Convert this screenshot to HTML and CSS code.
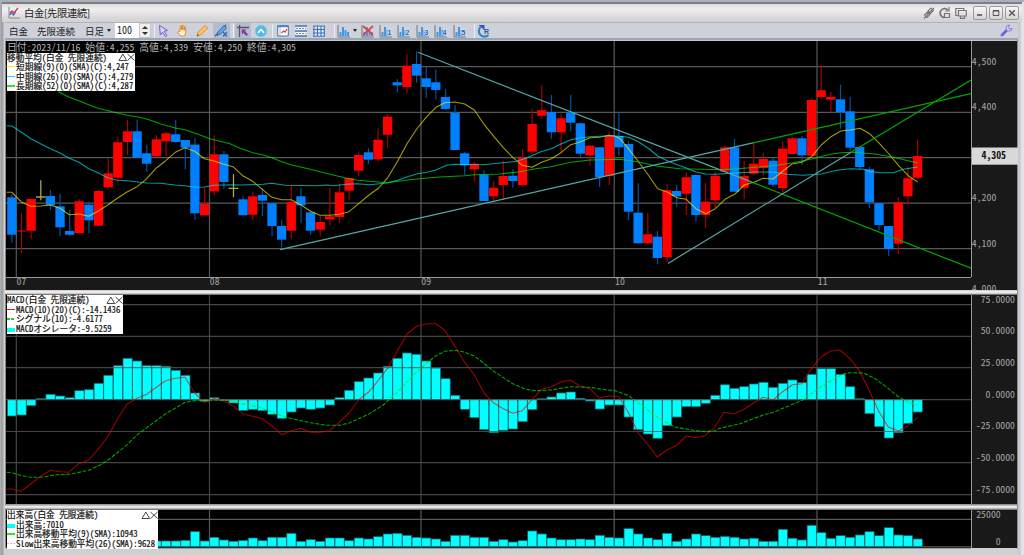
FILE: index.html
```html
<!DOCTYPE html>
<html lang="ja">
<head>
    <meta charset="UTF-8">
    <title>白金[先限連続]</title>
    <link rel="stylesheet" href="styles.css">
</head>
<body>

<div class="window">
    <div class="titlebar">
        <svg class="app-icon" width="12" height="12" viewBox="0 0 12 12"><path d="M1 0v11h11" fill="none" stroke="#888"/><path d="M1.5 8l2-2 2 2 2-3" fill="none" stroke="#3a6ee0" stroke-width="1.4"/><path d="M2 6l2-2 2 2 4-5" fill="none" stroke="#e03434" stroke-width="1.4"/></svg>
        <span class="title">白金[先限連続]</span>
        <div class="title-tools">
            <svg width="12" height="12" viewBox="0 0 12 12"><g fill="none" stroke="#777" stroke-width="1.1"><path d="M5 4l3-3 2.500 2.500-3 3zM1.500 8l3-3 2.500 2.500-3 3z"/><path d="M1 11.500L11 1M4 7l4-3"/></g></svg>
            <svg width="12" height="12" viewBox="0 0 12 12"><g fill="none" stroke="#777"><path d="M9 3A4.500 4.500 0 1 0 5 10.500" stroke-width="1.800"/><path d="M10 0v4H6M5.500 6.500h5v4h-5z" stroke-width="1.200"/></g></svg>
            <svg width="12" height="12" viewBox="0 0 12 12"><g fill="none" stroke="#777" stroke-width="1.200"><path d="M3 8.500H.8V1.500h8V3M3.500 3.500h7.800v5.500H3.500zM5.500 9v2.300h4V9"/></g></svg>
        </div>
        <div class="win-buttons">
            <button><svg width="8" height="8"><path d="M1 6h5" stroke="#555" stroke-width="1.600"/></svg></button>
            <button><svg width="8" height="8"><path d="M1 1.800h6" stroke="#555" stroke-width="1.600"/><path d="M1.200 1.500h5.600v5H1.200z" fill="none" stroke="#555"/></svg></button>
            <button><svg width="8" height="8"><path d="M1.200 1.200l5.600 5.600M6.800 1.200L1.200 6.800" stroke="#555" stroke-width="1.400"/></svg></button>
        </div>
    </div>

    <div class="toolbar">
        <span class="label brand">白金</span>
        <span class="label contract">先限連続</span>
        <span class="label period">日足</span>
        <i class="caret"></i>
        <div class="count">
            <span>100</span>
            <div class="spinner"><i class="up"></i><i class="down"></i></div>
        </div>
        <div class="group g-draw">
            <span class="tool"><svg width="14" height="14" viewBox="0 0 14 14"><path d="M2.500 1.500l8 5-3.500.7 3 4.300-1.700 1-2.800-4.300L3.300 11z" fill="#dcd4ff" stroke="#6b5fc8"/></svg></span>
            <span class="tool"><svg width="14" height="14" viewBox="0 0 14 14"><path d="M4 7.500V2.800q.8-1 1.300 0V6 1.700q.9-1 1.500 0V6 2.200q.9-.9 1.500 0v4.200-3q.9-.8 1.400 0v5.400q0 3.500-3.200 3.500-2 0-3-1.700L1.500 8q.7-1.400 2.500-.5z" fill="#fff0dc" stroke="#e08a2c"/></svg></span>
            <span class="tool"><svg width="14" height="14" viewBox="0 0 14 14"><path d="M2 12l1-3.500 7-7 2.500 2.500-7 7z" fill="#ffc36a" stroke="#d98a28"/><path d="M2 12l.6-2 1.500 1.400z" fill="#555"/></svg></span>
            <span class="tool on"><svg width="14" height="14" viewBox="0 0 14 14"><path d="M1 12L12 1" stroke="#555" stroke-width="1.200"/><path d="M3 11.500l1-3.500 6-6.500 2.500 2.500L6.500 10z" fill="#5aa9f0" stroke="#3267b0"/><path d="M9 8l4 4.500M13 8l-4 4.500" stroke="#3267b0" stroke-width="1.300"/></svg></span>
        </div>
        <div class="group g-view">
            <span class="tool on"><svg width="14" height="14" viewBox="0 0 14 14"><path d="M1 3.500h12M3.500 1v12" stroke="#556" stroke-width="1.300"/><path d="M5.500 5.500h5L9 7l3 3.500-1.500 1.500L7.500 9 6 10.500z" fill="#8a3a9c"/></svg></span>
            <span class="tool"><svg width="14" height="14" viewBox="0 0 14 14"><circle cx="7" cy="7" r="5.800" fill="#55b7e4" stroke="#7ccbee"/><path d="M4 8.800l3-3.300 3 3.300" fill="none" stroke="#fff" stroke-width="1.800"/></svg></span>
        </div>
        <div class="group g-grid">
            <span class="tool"><svg width="14" height="14" viewBox="0 0 14 14"><path d="M1.700 2h10.600v10H1.700z" fill="#fff" stroke="#4b6fae"/><path d="M1.500 2.200h11" stroke="#3f82d8" stroke-width="2"/><path d="M4 3v9" stroke="#89b6e8"/><path d="M5.500 9l2-2 1.500 1 2-3" stroke="#e04848" stroke-width="1.300" fill="none"/></svg></span>
            <span class="tool"><svg width="14" height="14" viewBox="0 0 14 14"><path d="M1.500 1.500h11v11h-11z" fill="#f3f6fa"/><path d="M1 2h12M1 7h12M1 12h12" stroke="#3e6fb5" stroke-width="1.300"/><path d="M2 4.500h10M2 9.500h10" stroke="#888" stroke-dasharray="2 1"/></svg></span>
            <span class="tool"><svg width="14" height="14" viewBox="0 0 14 14"><path d="M1.500 1.500h11v11h-11z" fill="#dfeaf6"/><path d="M1 2h12M1 5.500h12M1 9h12M1 12.300h12M2 1.500v11M5.500 1.500v11M9 1.500v11M12.300 1.500v11" stroke="#3e6fb5" stroke-width="1.100"/></svg></span>
        </div>
        <div class="group g-ind" id="indicators"></div>
        <div class="group g-reload">
            <span class="tool"><svg width="14" height="14" viewBox="0 0 14 14"><path d="M3.500 3A5 5 0 1 0 11.500 11" fill="none" stroke="#2d86cc" stroke-width="2.200"/><path d="M1.500 1h6v5.500z" fill="#2d5fae"/><text x="7" y="9.500" class="reload-r">R</text></svg></span>
        </div>
        <svg class="wrench" width="13" height="13" viewBox="0 0 13 13"><path d="M2 11l5-5" stroke="#6a62e0" stroke-width="2.800" stroke-linecap="round"/><path d="M9.800 1.200A3 3 0 1 0 12 4.500L9.500 5 8.300 3.600z" fill="#d5d6f6" stroke="#7d78e0"/></svg>
    </div>

    <div class="charts">
        <div class="pane price">
            <svg class="plot" id="price-plot" viewBox="6 41 965 235.500"></svg>
            <svg class="scale" id="price-scale" viewBox="972 41 46 249"></svg>
            <svg class="months" id="months" viewBox="6 278 966 12"></svg>
            <div class="ohlc">日付:2023/11/16 始値:4,255 高値:4,339 安値:4,250 終値:4,305</div>
            <div class="legend legend-price">
                <p class="head">移動平均(白金 先限連続)<svg width="17" height="8"><path d="M1 7.500L4.800 1l3.800 6.500zM9.500 1l7 6.500M16.500 1l-7 6.500" fill="none" stroke="#333" stroke-width=".9"/></svg></p>
                <p><i class="key yellow"></i>短期線(9)(0)(SMA)(C):4,247</p>
                <p><i class="key cyan"></i>中期線(26)(0)(SMA)(C):4,279</p>
                <p><i class="key green"></i>長期線(52)(0)(SMA)(C):4,287</p>
            </div>
        </div>
        <div class="splitter"></div>
        <div class="pane macd">
            <svg class="plot" id="macd-plot" viewBox="6 295 965 209"></svg>
            <svg class="scale" id="macd-scale" viewBox="972 295 46 209"></svg>
            <div class="legend legend-macd">
                <p class="head">MACD(白金 先限連続)<svg width="17" height="8"><path d="M1 7.500L4.800 1l3.800 6.500zM9.500 1l7 6.500M16.500 1l-7 6.500" fill="none" stroke="#333" stroke-width=".9"/></svg></p>
                <p><i class="key red"></i>MACD(10)(20)(C):-14.1436</p>
                <p><i class="key dashed"></i>シグナル(10):-4.6177</p>
                <p><i class="key block"></i>MACDオシレータ:-9.5259</p>
            </div>
        </div>
        <div class="splitter"></div>
        <div class="pane volume">
            <svg class="plot" id="volume-plot" viewBox="6 510 965 38"></svg>
            <svg class="scale" id="volume-scale" viewBox="972 510 46 38"></svg>
            <div class="legend legend-volume">
                <p class="head">出来高(白金 先限連続)<svg width="17" height="8"><path d="M1 7.500L4.800 1l3.800 6.500zM9.500 1l7 6.500M16.500 1l-7 6.500" fill="none" stroke="#333" stroke-width=".9"/></svg></p>
                <p><i class="key block"></i>出来高:7010</p>
                <p><i class="key green"></i>出来高移動平均(9)(SMA):10943</p>
                <p><i class="key magenta"></i>Slow出来高移動平均(26)(SMA):9628</p>
            </div>
        </div>
    </div>
</div>

<script src="chart.js"></script>
</body>
</html>
```

FILE: styles.css
```css
* { box-sizing: border-box; margin: 0; padding: 0; }

body {
    width: 1024px;
    height: 555px;
    overflow: hidden;
    background: #a6adb9;
    font-family: "Noto Sans CJK JP", sans-serif;
    color: #222;
}

.window {
    display: flex;
    flex-direction: column;
    height: 555px;
    margin-left: 1px;
    padding: 0 6px 0 4px;
    border-top: 2px solid #aab0bb;
    background: linear-gradient(90deg, #a2a2a2 0, #a2a2a2 2px, #d0d0d0 3px, #d0d0d0 1017px, #c2c2ca 1018px, #e4e3ec 1021px);
}

/* title bar */
.titlebar {
    display: flex;
    align-items: center;
    flex: none;
    height: 20px;
    margin: 0 -4px 0 -3px;
    padding: 0 3px 0 6px;
    border-top: 2px solid #7d7f7f;
    background: linear-gradient(#dcdcdc, #f0f0f0 30%, #d9d9d9 75%, #d2d2d2);
}

.titlebar .title {
    margin-left: 4px;
    font-size: 10.3px;
    line-height: 14px;
    color: #222;
    letter-spacing: -0.35px;
}

.title-tools {
    display: flex;
    gap: 4px;
    margin-left: auto;
}

.win-buttons {
    display: flex;
    gap: 2px;
    margin-left: 6px;
}

.win-buttons button {
    display: flex;
    align-items: center;
    justify-content: center;
    width: 14px;
    height: 14px;
    border: 1px solid #9a9a9a;
    border-radius: 2px;
    background: linear-gradient(#f8f8f8, #d4d4d4);
}

/* toolbar */
.toolbar {
    display: flex;
    align-items: center;
    flex: none;
    height: 18px;
    padding: 0 5px 0 4px;
    border-top: 1px solid #b4b4b4;
    border-bottom: 2px solid #9aa5b8;
    background: #cfd1da;
}

.label {
    font-size: 9.5px;
    line-height: 14px;
    white-space: nowrap;
}
.brand { width: 28px; }
.contract { width: 48px; }
.period { width: 22px; }

.caret {
    width: 0;
    border: 2.5px solid transparent;
    border-top: 3px solid #222;
    border-bottom: 0;
}

.count {
    display: flex;
    width: 36px;
    height: 15px;
    margin-left: 4px;
    background: #fff;
    font-size: 10px;
    line-height: 13px;
    font-feature-settings: "hwid";
    padding-left: 2px;
}

.spinner {
    display: flex;
    flex-direction: column;
    justify-content: center;
    align-items: center;
    gap: 3px;
    width: 12px;
    margin-left: auto;
    border: 1px solid #c8c8c8;
    background: #eee;
}
.spinner i { border: 3px solid transparent; width: 0; }
.spinner .up { border-bottom: 3px solid #333; border-top: 0; }
.spinner .down { border-top: 3px solid #333; border-bottom: 0; }

.group {
    display: flex;
    align-items: center;
    height: 14px;
}
.tool {
    display: flex;
    align-items: center;
    justify-content: center;
    width: 18.4px;
    height: 15px;
}
.tool.on {
    background: #b4bdd0;
    background-clip: content-box;
    padding: 0 1px;
}
.g-draw { margin-left: 3px; border-left: 1px solid #eceef2; }
.g-draw .tool { width: 18.9px; }
.g-view, .g-grid, .g-ind, .g-reload { border-left: 1px solid #eceef2; }
.g-view { margin-left: 2px; }
.g-grid { margin-left: 2px; }
.g-ind { margin-left: 5px; }
.g-ind .tool:first-child { width: 18px; margin-right: 0; }
.g-ind .caret { margin-right: 2px; }
.g-reload { margin-left: 5px; }
.wrench { margin-left: auto; }

/* chart panes */
.charts {
    border-right: 1px solid #8c8c8c;
    height: 509px;
    flex: none;
}

.pane {
    display: grid;
    grid-template-columns: 965px 1px 46px;
    position: relative;
    width: 1012px;
    background: #191919;
    border-left: 1px solid #888;
}
.pane.price { grid-template-rows: 235.5px 13.5px; height: 250px; border-top: 1px solid #c4c8cc; }
.pane.macd { height: 210px; border-top: 1px solid #777; }
.pane.volume { height: 38px; }

.plot {
    display: block;
    width: 965px;
    height: 100%;
    background: #000;
    box-shadow: 1px 0 0 #9a9a9a, 0 1px 0 #9a9a9a;
}
.scale {
    display: block;
    grid-column: 3;
    grid-row: 1 / 3;
    width: 46px;
    height: 100%;
}
.macd .scale, .volume .scale { grid-row: 1; }
.months {
    grid-column: 1;
    grid-row: 2;
    width: 966px;
    height: 12px;
    margin-top: 1.5px;
}

.splitter {
    height: 4px;
    background: linear-gradient(#c2c2c2, #fafafa 50%, #b5b5b5);
}
.macd + .splitter { height: 6px; background: linear-gradient(#777 0, #bbb 25%, #fff 50%, #ccc 65%, #aaa 80%, #555); }

svg text {
    font-family: "Noto Sans CJK JP", sans-serif;
    font-feature-settings: "hwid";
    font-size: 9.8px;
    fill: #a4a4a4;
}
svg text.digit, svg text.reload-r { font: bold 7px "Liberation Sans", sans-serif; fill: #2b5aa8; }
svg text.last { font-weight: bold; fill: #111; }

.grid { stroke: #585858; stroke-width: 1.2; }
.up { fill: #f00; stroke: none; }
.down { fill: #0080ff; }
.wick-up { stroke: #a80000; stroke-width: 1.2; }
.wick-down { stroke: #0052a4; stroke-width: 1.2; }
.doji { stroke: #a8a850; stroke-width: 1.3; }
.bar { fill: #0ff; stroke: #006c70; stroke-width: .7; }
.line { fill: none; stroke-width: 1.1; stroke-linejoin: round; }

/* text over the plots */
.ohlc, .legend {
    position: absolute;
    white-space: nowrap;
    font-feature-settings: "hwid";
}

.ohlc {
    left: 1px;
    top: 0;
    color: #b4b4b4;
    font-size: 9.8px;
    line-height: 12px;
}

.legend {
    left: 1px;
    background: #fff;
    color: #111;
    font-size: 8.7px;
    line-height: 9.6px;
    -webkit-text-stroke: .2px #111;
}
.legend p { display: flex; align-items: center; height: 9.6px; }
.legend .head svg { margin-left: auto; }
.legend-price { top: 11.5px; width: 128px; height: 38.5px; }
.legend-macd { top: 0; width: 116px; height: 38.5px; }
.legend-volume { top: 0; width: 151px; height: 38.5px; }

.key { width: 8px; height: 1.2px; margin-right: 1px; }
.key.yellow { background: #f4f000; }
.key.cyan { background: #00e4f4; }
.key.green { background: #30e030; }
.key.red { background: #e02020; }
.key.dashed { background: repeating-linear-gradient(90deg, #30c030 0 3px, #fff 3px 4px); }
.key.magenta { background: repeating-linear-gradient(90deg, #f4a0f0 0 2px, #fff 2px 3px); }
.key.block { height: 4px; margin-top: 3px; background: #0ff; }
```

FILE: chart.js
```js
const X0 = 11.9, STEP = 9.635;
const cx = i => X0 + i * STEP;
const $ = id => document.getElementById(id);

// [kind, high, body top, body bottom, low]
const candles = [
    ['d',194,197.3,234.7,242.7],['u',213.3,230.5,231.5,253],['u',198.7,199,230.7,239.3],['x',180.3,197,197,200.3],['d',190,196,205.3,210],
    ['d',193.7,206.3,227.3,236],['d',210,231,234.7,235.7],['u',199.3,201.3,233,234.3],['d',201.7,204.7,220.3,233.3],['u',190.3,191,225.7,226],
    ['u',158.7,173.3,187.3,189.7],['u',137,142.3,177.7,182.3],['u',119.7,131.3,142,155],['d',119.7,131.3,157.7,157.7],['d',144.7,153.3,163.7,171.7],
    ['u',135,139.3,156.3,157],['u',131.7,133.3,141.3,156],['d',119.7,134.3,142,142.7],['d',139.7,140,147.7,169.3],['d',138,144.7,213.3,219.7],
    ['u',188,203.7,215.3,215.3],['u',135.3,154.3,191.3,195],['d',151,154.3,182,189],['x',174.3,188.3,188.3,197.3],['d',196.3,199.3,215.3,215.3],
    ['u',191.7,196.3,214.7,220.3],['d',188.3,195,200.7,216.3],['d',203.3,203.3,226,236.3],['d',219.7,226,239.7,247.3],['u',184.7,202,230.7,238.7],
    ['d',188.3,196.3,205.3,223],['d',210.7,212.3,230.7,234.7],['u',215.7,222,229.7,236.3],['u',188.3,216.3,219.3,225.7],['u',183.7,192.3,217,223],
    ['u',177.3,178,190.7,200.3],['u',152.3,155,170.7,176.3],['d',147.7,152.3,159.7,164.3],['u',128.3,139.7,159.3,161.7],['u',113.7,116.7,134.7,148.3],
    ['d',79.3,82.3,85.3,92],['u',54.3,65.7,87,93.3],['d',51.7,64,75.7,82.7],['d',66.7,78.3,87,98],['d',69.3,82.3,90,99.3],
    ['d',89,97,109,109.7],['d',105,112.7,150,150],['d',151.7,153.3,165.3,175],['u',162,163.7,169.3,181.7],['d',170.3,174.7,201,201],
    ['u',181.3,187.7,196.3,201.7],['u',161,176,185,200],['d',169.3,175.7,181,187.7],['u',149.3,157.7,185,186.7],['u',108.7,124,151.7,153.7],
    ['u',85.3,110.3,115.7,119],['d',95,112,132.3,138.7],['u',113.7,118.3,132.3,152.7],['d',95,112.7,122.7,130.7],['d',122.7,123.3,153.7,157.3],
    ['u',145.3,145.7,155.3,165.3],['d',147.3,147.3,177,187],['u',131.7,135.3,176,185],['d',111.7,136,147.3,155.7],['d',141,144,211.7,220],
    ['d',183.3,212.7,243.3,243.3],['u',213,234.3,243.3,244.3],['d',231,236.7,258,264.3],['u',184.3,190.3,257,262.3],['d',185,191,196.3,206.7],
    ['u',172.3,177.3,193.7,215],['d',174.7,175,215,221.7],['u',183,201.7,215,228.3],['u',172,175.7,200.3,208],['u',145.7,147.3,171.7,172],
    ['d',139,147.3,191.7,191.7],['u',161,176,187.7,199],['u',143,163.7,173.7,175],['u',152.7,159,168,175],['d',158,160.7,184.7,187.3],
    ['u',141.3,148.7,188,192.7],['u',137,138.3,154,154],['d',136,138.3,155.3,164.7],['u',97.7,100,155.7,155.7],['u',65.3,90.3,97,99],
    ['u',92,97,99.7,112],['d',84.7,99.3,112,128.7],['d',96.7,111.3,147.7,151.3],['d',146,147,167,170],['d',167,169.3,202.3,208.3],
    ['d',203.3,203.3,225,230],['d',226,226,249,256.3],['u',197.3,202.3,243.7,254],['u',166.7,178.3,196.3,205.3],['u',139.7,156,177.7,179.3]
];

const oscillator = [
    416,415,405.7,398.7,394.3,396,397.7,390.7,389.7,383.3,375.3,365.7,358.3,361,365.7,365.7,366.3,370.3,375.3,393,
    401.3,397.7,400.3,403,410.5,409.3,410.7,414.3,418.3,412,408,409.3,408,405,397.7,390.3,381.7,378,373,366.3,
    358.3,353,354.3,361,368,378.7,395.3,409.3,417.7,429.7,432.7,430.3,429,421.7,409.7,398.7,397,393,392,398.3,
    401,409,405,405,417,429.7,434,438.3,425.7,417,406.7,406.7,403.3,395.3,384.8,388.3,386.7,384,382.3,387.3,
    383.3,380,382.7,374.3,368.7,368.7,374.3,386.7,398.7,413.7,426.7,438,432.7,423.3,412
];

const volume = [
    541,540,539,541,540,538,541,541,540,539,538,540,541,540,540,541,541,541,540.3,531.7,
    541,537.3,540,541.3,540.5,538,540.7,537.3,537.3,533.3,541.3,539.7,541.3,538,538,540.7,538,539,536.7,534,
    533.3,535.3,537.3,538,539,541.3,535.3,535.3,537.3,537.3,541.3,539.7,542,540.7,531,534,538,539.7,539.7,539,
    539.7,535.3,537.3,538,528.7,534,538,539.7,533.3,541.3,539,534,535.7,537.3,536.5,537.3,539,538.3,541.3,541.3,
    529.3,538.3,540,525.3,532.7,538.3,535.7,537.3,535,531.7,535.7,527.7,535,535.7,539
];

// [x offset, y offset, x, y, x, y, ...] segments, three units to a pixel
const sma9 = [
    [0,90, 20,307,36,307,64,336,93,349,123,348,151,345,180,355,208,374,237,372,266,379,294,364,323,345,352,325,381,306,411,290,438,268,468,235,497,212,526,187,555,173,584,184,613,206,642,213,670,222,699,230,728,257],
    [240,90, 38,274,67,298,96,322,125,329,154,329,183,345,211,363,240,376,270,376,298,373,327,365,356,341,387,315,416,294,444,262,473,213,502,160,530,117,560,80,588,52],
    [440,40, 14,188,45,186,74,192,103,210,130,250,162,290,190,323,218,352,247,376,276,382,305,367,334,356,363,338,392,314,420,306,450,293,478,292,507,286,525,289,540,296,567,328,596,366,625,405,653,446,682,456,711,473],
    [680,40, 19,478,48,506,77,521,106,506,135,478,165,462,193,435,221,427,250,415,279,417,308,394,336,372,365,367,395,350,424,315,453,290,482,273,511,270,540,265,569,281,598,310,627,342,656,377,685,407,713,426]
];
const sma26 = [
    [0,90, 20,107,36,108,64,127,93,146,123,162,151,176,180,189,208,205,237,217,266,236,294,248,323,263,352,271,381,272,420,277,440,279,480,280,526,285,555,287,584,292,613,291,642,286,700,284],
    [240,90, 0,285,70,283,96,280,135,286,230,287,259,285,280,287,320,283,350,281,390,284,440,279,473,271,502,260,530,252,560,247,588,240],
    [440,40, 20,376,45,373,130,374,160,371,230,364,260,354,300,336,334,326,363,312,392,299,420,294,450,290,520,287,567,292,596,306,625,325,653,348,682,362,711,374],
    [680,40, 0,377,19,384,48,396,77,402,106,403,165,399,221,396,279,396,320,403,370,406,424,402,470,391,511,386,550,388,569,394,598,398,640,398,670,388,713,381]
];
const sma52 = [
    [0,90, 175,5,208,22,237,32,266,44,294,55,330,64,381,76,420,82,450,90,480,101,526,114,555,119,590,131,630,146,690,161],
    [240,90, 0,175,38,188,67,194,96,203,125,215,155,225,211,238,270,253,327,266,350,270,387,274,444,278,473,274,510,269,588,262],
    [440,40, 0,411,74,407,103,404,180,402,235,396,276,388,334,380,392,367,450,360,540,358,600,367,653,379],
    [680,40, 0,386,130,389,200,384,279,377,336,369,395,357,450,343,482,338,520,337,580,341,640,352,713,369]
];
const macd = [
    [0,285, 20,612,36,612,64,619,93,596,123,573,151,556,180,560,206,562,237,536,266,525,294,493,323,456,352,403,381,357,411,340,440,328,470,306,497,287,526,280,555,277,584,324,613,353,642,340,670,348,699,362,728,386],
    [240,300, 38,349,67,356,96,378,125,404,154,392,183,385,211,397,240,397,269,392,298,367,327,339,356,299,387,275,416,240,444,203,473,151,502,101,530,79,560,71,588,71,614,91,646,140,672,184,702,223],
    [480,300, 12,279,40,308,70,326,98,340,127,332,156,299,185,268,214,260,243,246,271,240,300,258,330,266,358,295,388,287,417,290,446,340,475,399,503,433,532,471,561,450,590,436,619,408,648,413,675,407,704,382],
    [720,285, 12,382,43,386,72,373,101,354,130,337,159,345,188,320,217,299,246,296,275,250,303,216,332,198,360,195,390,221,420,260,447,315,477,380,505,426,535,438,564,422,593,397]
];
const signal = [
    [0,285, 20,562,36,563,66,572,93,577,123,577,170,569,208,568,266,556,300,540,323,526,352,503,381,479,411,450,440,428,497,386,555,352,590,346,670,346,710,350],
    [240,300, 0,310,67,324,125,348,160,357,211,368,260,376,298,376,327,369,387,342,430,315,473,275,520,225,560,190,588,167,614,154,646,151,672,156,702,168],
    [480,300, 0,181,40,213,98,251,135,267,165,272,214,270,271,260,330,262,375,269,405,272,446,287,475,308,503,330,540,358,585,381,640,391,680,395,704,392],
    [720,285, 0,430,60,416,130,390,160,382,246,346,300,307,332,287,370,267,390,263,430,264,464,280,500,307,535,335,564,351,593,361]
];

function polyline(parts, color, extra = '') {
    const pts = [];
    for (const [ox, oy, ...v] of parts) {
        for (let i = 0; i < v.length; i += 2) {
            pts.push((ox + v[i] / 3).toFixed(1) + ',' + (oy + v[i + 1] / 3).toFixed(1));
        }
    }
    return `<polyline class="line" points="${pts.join(' ')}" stroke="${color}" ${extra}/>`;
}

const segment = (x1, y1, x2, y2, color) =>
    `<line x1="${x1}" y1="${y1}" x2="${x2}" y2="${y2}" stroke="${color}" stroke-width="1.2"/>`;

function grid(rows, top, bottom) {
    return rows.map(y => `<line class="grid" x1="6" x2="971" y1="${y}" y2="${y}"/>`).join('') +
        [16.3, 209.5, 421, 614.2, 817].map(x => `<line class="grid" x1="${x}" x2="${x}" y1="${top}" y2="${bottom}"/>`).join('');
}

function candle([kind, high, top, bottom, low], i) {
    const x = cx(i);
    if (kind === 'x') {
        return `<path class="doji" d="M${x} ${high}V${low}M${x - 4.8} ${top}h9.6"/>`;
    }
    const name = kind === 'u' ? 'up' : 'down';
    return `<line class="wick-${name}" x1="${x}" x2="${x}" y1="${high}" y2="${low}"/>` +
        `<rect class="${name}" x="${x - 4.7}" y="${top}" width="9.3" height="${bottom - top}"/>`;
}

function bars(values, base) {
    return values.map((y, i) =>
        `<rect class="bar" x="${cx(i) - 4.5}" y="${Math.min(y, base)}" width="9.2" height="${Math.max(Math.abs(base - y), .8)}"/>`).join('');
}

$('price-plot').innerHTML = grid([66.7, 112.3, 157.6, 203.2, 248.7], 41, 277) +
    candles.map(candle).join('') +
    polyline(sma9, '#ffee00', 'opacity=".65"') +
    polyline(sma26, '#00f0f0', 'opacity=".65"') +
    polyline(sma52, '#00f000', 'opacity=".68"') +
    segment(418, 52.3, 753, 182.6, '#58a8a8') + segment(753, 182.6, 971, 268.2, '#00a800') +
    segment(280, 249.6, 753, 142.8, '#58a8a8') + segment(753, 142.8, 971, 93.7, '#00a800') +
    segment(668, 263.4, 851, 152.3, '#58a8a8') + segment(851, 152.3, 971, 80, '#00a800');

$('macd-plot').innerHTML = bars(oscillator, 399.6) +
    `<g opacity=".8">${grid([304.7, 336.4, 367.6, 399.6, 431.5, 462.7, 494.6], 295, 504)}</g>` +
    polyline(macd, '#f00000', 'opacity=".65"') +
    polyline(signal, '#00e800', 'opacity=".7" stroke-dasharray="4 1.500"');

$('volume-plot').innerHTML = grid([519.4, 546.8], 510, 548) + bars(volume, 546.5);

// scales
const label = (x, y, t, anchor = 'end') => `<text x="${x}" y="${y + 3.5}" text-anchor="${anchor}">${t}</text>`;

$('price-scale').innerHTML =
    [['4,500', 61.3], ['4,400', 106.8], ['4,200', 197.8], ['4,100', 243.3], ['4,000', 288.7]]
        .map(([t, y]) => label(971.8, y, t, 'start')).join('') +
    '<rect x="971" y="147.500" width="47" height="17.200" fill="#d8d8d8"/>' +
    '<text class="last" x="981.500" y="158.600">4,305</text>';

$('macd-scale').innerHTML = [75, 50, 25, 0, -25, -50, -75]
    .map((v, i) => label(1015, 299 + i * 31.7, v.toFixed(4))).join('');

$('volume-scale').innerHTML = label(1000.7, 514, '25000') + label(1000.7, 541, '0');

$('months').innerHTML = [['07', 16.5], ['08', 209.8], ['09', 421.3], ['10', 615], ['11', 817.8]]
    .map(([t, x]) => label(x, 281.8, t, 'start')).join('');

// indicator buttons: chart picker, clear, presets 1-5
const chartIcon = extra => `<span class="tool"><svg width="14" height="14" viewBox="0 0 14 14">
    <path d="M1 1v12h12" fill="none" stroke="#777"/>
    <path d="M3.500 12V8M6 12V3M8.500 12V6M11 12V8" stroke="#3b95e6" stroke-width="1.900"/>${extra}</svg></span>`;
$('indicators').innerHTML = chartIcon('') + '<i class="caret"></i>' +
    chartIcon('<path d="M2 2l10 9M12 2L2 11" stroke="#e04444" stroke-width="1.700"/>') +
    [1, 2, 3, 4, 5].map(n => chartIcon(`<text class="digit" x="8.500" y="10.500" stroke="#dfe6f2" stroke-width="1.400" paint-order="stroke">${n}</text>`)).join('');
```
